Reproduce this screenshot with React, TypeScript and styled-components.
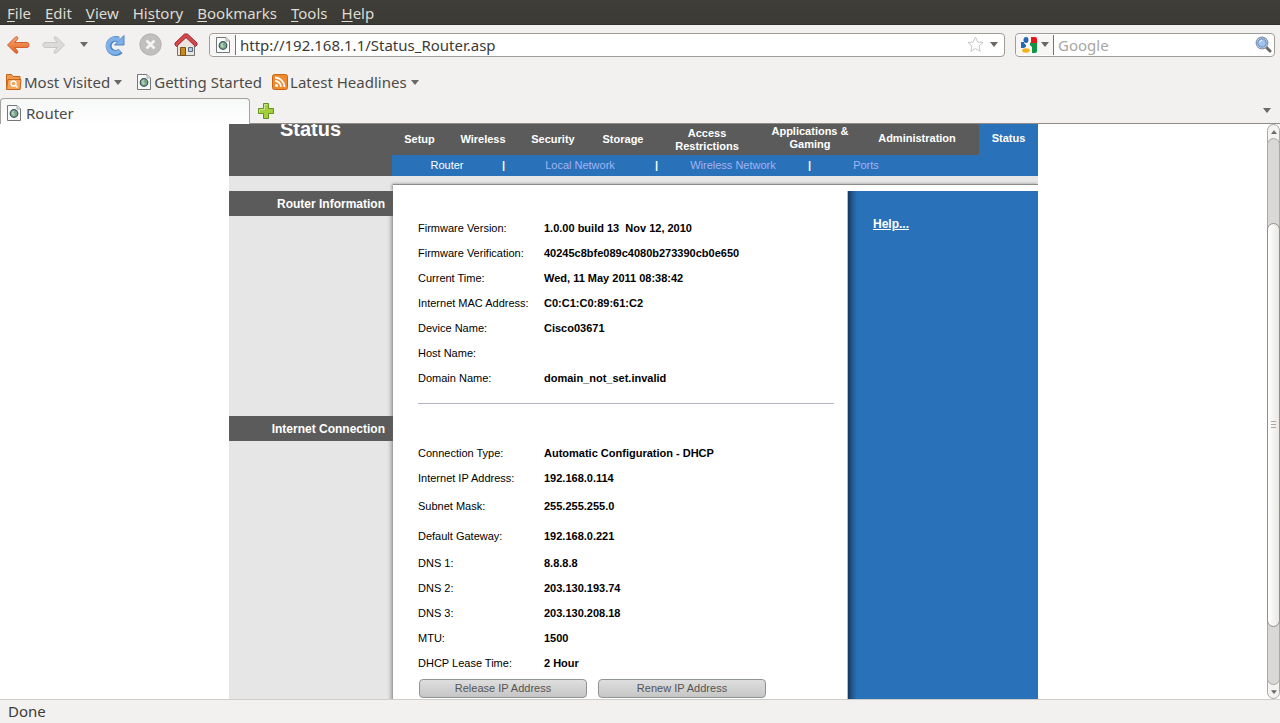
import React from "react";
import styled, { createGlobalStyle, css } from "styled-components";

const Global = createGlobalStyle`
  * { box-sizing: border-box; }
  body { margin: 0; background: #f2f1f0; }
  button, input { font: inherit; }
`;

const Browser = styled.div`
  display: flex;
  flex-direction: column;
  height: 100vh;
  overflow: hidden;
  font: 15px/20px "Noto Sans", "Open Sans", sans-serif;
  color: #3c3b37;
`;

const MenuBar = styled.nav`
  display: flex;
  align-items: center;
  gap: 14px;
  height: 25px;
  flex: none;
  padding: 1px 7px 0;
  background: linear-gradient(#3f3e39, #3b3a35);
  border-bottom: 1px solid #32312d;
`;

const MenuItem = styled.button`
  border: 0;
  padding: 0;
  background: none;
  color: #dfdbd2;
  line-height: 20px;
`;

const Key = styled.span`
  text-decoration: underline;
  text-underline-offset: 2px;
`;

const Toolbar = styled.div`
  display: flex;
  align-items: center;
  flex: none;
  height: 39px;
  padding: 0 5px 0 6px;
`;

const ToolGroup = styled.div`
  display: flex;
  align-items: center;
  gap: 12px;
  width: 203px;
`;

const IconButton = styled.button<{ $width?: number }>`
  display: flex;
  align-items: center;
  justify-content: center;
  flex: none;
  ${(p) => p.$width && css`width: ${p.$width}px;`}
  border: 0;
  padding: 0;
  background: none;
`;

const Field = styled.div<{ $search?: boolean }>`
  display: flex;
  align-items: center;
  gap: 4px;
  height: 24px;
  border: 1px solid #a09c97;
  border-radius: 4px;
  background: #fff;
  overflow: hidden;
  ${(p) =>
    p.$search
      ? css`flex: none; width: 260px; margin-left: 10px; padding-right: 2px;`
      : css`flex: 1; padding-right: 4px;`}
`;

const FieldLead = styled.div<{ $width: number }>`
  display: flex;
  align-items: center;
  justify-content: center;
  gap: 4px;
  flex: none;
  width: ${(p) => p.$width}px;
  height: 20px;
  border-right: 1px solid #77746f;
  background: #f7f6f5;
`;

const TextInput = styled.input`
  flex: 1;
  min-width: 0;
  border: 0;
  outline: 0;
  padding: 0;
  background: none;
  color: #3c3b37;
  line-height: 20px;
  &::placeholder { color: #aaa7a3; opacity: 1; }
`;

const Bookmarks = styled.div`
  display: flex;
  align-items: center;
  gap: 10px;
  flex: none;
  height: 34px;
  padding: 2px 5px 0;
`;

const Bookmark = styled.button`
  display: flex;
  align-items: center;
  gap: 2px;
  border: 0;
  padding: 0;
  background: none;
  color: #4c4b48;
  line-height: 20px;
`;

const FolderCaret = styled.span`
  display: flex;
  padding: 0 4px 0 2px;
`;

const TabStrip = styled.div`
  display: flex;
  align-items: center;
  flex: none;
  height: 26px;
  padding-right: 9px;
  border-bottom: 1px solid #8f8c88;
`;

const Tab = styled.button`
  display: flex;
  align-items: center;
  gap: 4px;
  align-self: stretch;
  width: 250px;
  margin: 0 8px -1px 0;
  padding: 2px 5px 0;
  border: 1px solid #a5a29e;
  border-bottom: 0;
  border-radius: 4px 4px 0 0;
  background: linear-gradient(#f6f7f7, #fff);
  color: #4c4b48;
`;

const Spacer = styled.div`
  flex: 1;
`;

const Viewport = styled.div`
  display: flex;
  flex: 1;
  min-height: 0;
  background: #fff;
`;

const Scroller = styled.main`
  flex: 1;
  min-width: 0;
  overflow: hidden;
`;

const Page = styled.div`
  display: flex;
  flex-direction: column;
  width: 100%;
  max-width: 809px;
  min-height: calc(100% + 20px);
  margin: -20px auto 0;
  font: 11px/13px "Liberation Sans", Arial, sans-serif;
  color: #000;
`;

const Header = styled.header`
  display: flex;
  flex: none;
  background: #5b5b5b;
`;

const Title = styled.h1`
  width: 163px;
  margin: 0;
  padding: 13px 0 0 51px;
  font-size: 20px;
  line-height: 24px;
  color: #fff;
`;

const HeaderNav = styled.div`
  flex: 1;
`;

const Tabs = styled.nav`
  display: flex;
  height: 51px;
  padding-top: 20px;
`;

const TabLink = styled.a<{ $width: number; $raised?: boolean; $active?: boolean }>`
  display: flex;
  align-items: center;
  justify-content: center;
  width: ${(p) => p.$width}px;
  padding-bottom: ${(p) => (p.$raised ? 3 : 0)}px;
  background: ${(p) => (p.$active ? "#2971b9" : "none")};
  color: #fff;
  font-weight: bold;
  text-align: center;
  text-decoration: none;
  ${(p) => p.$active && css`margin-left: auto;`}
`;

const SubNav = styled.nav`
  display: flex;
  align-items: center;
  height: 21px;
  background: #2971b9;
  color: #fff;
  text-align: center;
`;

const SubLink = styled.a<{ $width: number; $active?: boolean }>`
  width: ${(p) => p.$width}px;
  color: ${(p) => (p.$active ? "#fff" : "#a3b4f5")};
  text-decoration: none;
`;

const Bar = styled.b`
  width: 3px;
`;

const Strip = styled.div`
  display: flex;
  flex: none;
  height: 15px;
  background: #e6e6e6;
  overflow: hidden;
`;

const StripEdge = styled.div`
  flex: 1;
  margin: 8px 0 0 164px;
  border-top: 1px solid #8c8c8c;
  background: #fff;
  box-shadow: -1px 0 3px #8c8c8c;
`;

const Body = styled.div`
  display: flex;
  flex: 1;
`;

const Sections = styled.div`
  display: flex;
  flex-direction: column;
  flex: 1;
`;

const Section = styled.section`
  display: flex;
  &:last-child { flex: 1; }
`;

const Side = styled.div`
  width: 164px;
  flex: none;
  background: linear-gradient(to left, #989898 0, #c2c2c2 2px, #dadada 4px, #e6e6e6 6px);
`;

const SideTitle = styled.h2`
  margin: 0;
  padding: 1px 8px 0 0;
  background: #5b5b5b;
  color: #fff;
  font-size: 12px;
  line-height: 24px;
  text-align: right;
`;

const Content = styled.div`
  flex: 1;
  padding: 25px 13px 0 25px;
`;

const Facts = styled.table`
  width: 100%;
  border-collapse: collapse;
  th, td { padding: 0; text-align: left; white-space: pre; }
  th { width: 126px; font-weight: normal; }
  td { font-weight: bold; }
`;

const FactRow = styled.tr<{ $tall?: boolean }>`
  height: ${(p) => (p.$tall ? 30 : 25)}px;
`;

const Rule = styled.hr`
  height: 1px;
  margin: 12px 0;
  border: 0;
  background: #b3b3c9;
`;

const Actions = styled.div`
  display: flex;
  gap: 11px;
  padding: 3px 1px 0;
`;

const Action = styled.button`
  width: 168px;
  height: 19px;
  padding: 0;
  border: 1px solid #8f9494;
  border-radius: 4px;
  background: linear-gradient(#dedede, #c6c6c6);
  color: #555;
`;

const Help = styled.aside`
  width: 191px;
  flex: none;
  padding: 26px;
  background: linear-gradient(to right, #a9bfd6 0, #a9bfd6 1px, #16365c 1px, #1f5890 5px, #2971b9 10px);
`;

const HelpLink = styled.a`
  color: #fff;
  font-size: 12px;
  line-height: 14px;
  font-weight: bold;
`;

const Scrollbar = styled.div`
  display: flex;
  flex-direction: column;
  width: 13px;
  flex: none;
  border: 1px solid #aaa7a3;
  border-radius: 7px;
  background: #f4f3f2;
`;

const ScrollButton = styled.button`
  display: flex;
  align-items: center;
  justify-content: center;
  height: 13px;
  flex: none;
  padding: 0;
  border: 0;
  background: none;
`;

const Track = styled.div`
  display: flex;
  flex-direction: column;
  flex: 1;
  margin: 0 -1px;
  border: 1px solid #aaa7a3;
  border-radius: 7px;
  background: #dad8d6;
`;

const Thumb = styled.div`
  display: flex;
  align-items: center;
  justify-content: center;
  flex: 405;
  margin: 0 -1px;
  border: 1px solid #918e8a;
  border-radius: 7px;
  background: linear-gradient(to right, #fff, #e9e8e6);
`;

const TrackGap = styled.div<{ $grow: number }>`
  flex: ${(p) => p.$grow};
`;

const StatusBar = styled.footer`
  flex: none;
  height: 24px;
  padding: 1px 8px;
  border-top: 1px solid #cfccc9;
`;

const Caret = ({ up = false, small = false }: { up?: boolean; small?: boolean }) => (
  <svg width={small ? 6 : 8} height={small ? 4 : 5} viewBox="0 0 8 5">
    <path d={up ? "M0 5 4 0 8 5z" : "M0 0h8L4 5z"} fill="#6b6965" />
  </svg>
);

const PageIcon = () => (
  <svg width="16" height="16" viewBox="0 0 16 16">
    <path d="M1.5.5h9.500l3.500 3.500v11.500h-13z" fill="#fbfbfa" stroke="#72777a" />
    <path d="M11 .5v3.500h3.500" fill="#dfe2e0" stroke="#a6aaa8" />
    <circle cx="8" cy="8.500" r="3.800" fill="#7aa886" stroke="#3a5365" strokeWidth="1.200" />
    <path d="M5.500 8q1-3 3-2.500l-1 2.500 1.500 1-1 2q-2-.5-2.500-3z" fill="#b3d0b0" />
  </svg>
);

const BackIcon = () => (
  <svg width="24" height="22" viewBox="0 0 24 22">
    <defs>
      <linearGradient id="orange" x2="0" y2="1">
        <stop stopColor="#f8a878" />
        <stop offset="1" stopColor="#e4601c" />
      </linearGradient>
    </defs>
    <path
      d="M1.500 11 9.500 3q2-1 2.500 1 0 1-3.500 4.500H21q2 0 2 2.500t-2 2.500H8.500Q12 17 12 18q-.5 2-2.500 1z"
      fill="url(#orange)"
      stroke="#cf6330"
    />
  </svg>
);

const ForwardIcon = () => (
  <svg width="24" height="22" viewBox="0 0 24 22">
    <path
      d="M22.500 11 14.500 3q-2-1-2.500 1 0 1 3.500 4.500H3Q1 8.500 1 11t2 2.500h12.500Q12 17 12 18q.5 2 2.500 1z"
      fill="#dddbd9"
      stroke="#c9c7c4"
    />
  </svg>
);

const ReloadIcon = () => (
  <svg width="22" height="22" viewBox="0 0 22 22">
    <path d="M15.500 5.500A7 7 0 1 0 17.500 17" fill="none" stroke="#4c84c4" strokeWidth="6" />
    <path d="M21 1.500v9.500h-9.500z" fill="#7fb1e6" stroke="#4c84c4" strokeLinejoin="round" />
    <path d="M16.500 6.500A7 7 0 1 0 17 16.500" fill="none" stroke="#7fb1e6" strokeWidth="4" />
  </svg>
);

const StopIcon = () => (
  <svg width="23" height="23" viewBox="0 0 23 23">
    <circle cx="11.500" cy="11.500" r="10.700" fill="#c1bfbd" stroke="#b5b3b1" />
    <path d="m7.500 7.500 8 8m0-8-8 8" stroke="#f5f4f3" strokeWidth="2.500" />
  </svg>
);

const HomeIcon = () => (
  <svg width="24" height="24" viewBox="0 0 24 24">
    <path d="M3.500 12 12 4l8.500 8v10.500h-17z" fill="#e9e6df" stroke="#77736c" />
    <path d="M6.500 14.500h5v8h-5z" fill="#c98a1c" stroke="#7a5211" />
    <path d="M14.500 14.500h4v4h-4z" fill="#b5cbe0" stroke="#596d80" />
    <path
      d="M2.500 13.500 12 4.500l9.500 9 1.500-1.500V10L13.500 1h-3L1 10v2z"
      fill="#d5484d"
      stroke="#a12a30"
      strokeLinejoin="round"
    />
  </svg>
);

const FolderIcon = () => (
  <svg width="17" height="16" viewBox="0 0 17 16">
    <path d="M1.500 15V.5h5l1.500 2h7v12.500z" fill="#f29a4c" stroke="#c4641c" />
    <path d="m1.500 15.500 1.500-10h13l-1 10z" fill="#f5a65c" stroke="#c4641c" />
    <circle cx="8.500" cy="9.500" r="2.500" fill="none" stroke="#fff" strokeWidth="1.300" />
    <path d="m10.500 11.500 2 2" stroke="#fff" strokeWidth="1.500" />
  </svg>
);

const FeedIcon = () => (
  <svg width="16" height="16" viewBox="0 0 16 16">
    <rect x=".5" y=".5" width="15" height="15" rx="2" fill="#f08a2c" stroke="#cb6516" />
    <circle cx="4.500" cy="11.500" r="1.500" fill="#fff" />
    <path d="M3 7a6 6 0 0 1 6 6M3 3.500A9.500 9.500 0 0 1 12.500 13" fill="none" stroke="#fff" strokeWidth="1.800" />
  </svg>
);

const PlusIcon = () => (
  <svg width="16" height="16" viewBox="0 0 16 16">
    <path d="M5.500.5h5v5h5v5h-5v5h-5v-5h-5v-5h5z" fill="#a4cf3c" stroke="#64901d" strokeLinejoin="round" />
    <path d="M1.500 9.500v-3h5v-5h3" fill="none" stroke="#cbe58a" />
  </svg>
);

const StarIcon = () => (
  <svg width="17" height="17" viewBox="0 0 17 17">
    <path
      d="m8.500 1 2.200 5 5.300.5-4 3.500 1.200 5.300-4.700-2.800-4.700 2.800L5 10 1 6.500 6.300 6z"
      fill="#fff"
      stroke="#c9c7c5"
    />
  </svg>
);

const GoogleIcon = () => (
  <svg width="16" height="16" viewBox="0 0 16 16">
    <path d="M8 0h6q2 0 2 2v4H9z" fill="#e5191c" />
    <path d="M9 6h7v8q0 2-2 2H9z" fill="#109447" />
    <path d="M0 5h5v6H0z" fill="#2767b5" />
    <path d="M3 0h7v5L8 7l3 3v6H4L3 11l3-2-3-3z" fill="#fff" />
    <ellipse cx="5" cy="3" rx="2.500" ry="3" fill="#2767b5" />
    <ellipse cx="5" cy="13.500" rx="3.800" ry="2.200" fill="#f2b21d" />
  </svg>
);

const SearchIcon = () => (
  <svg width="17" height="17" viewBox="0 0 17 17">
    <path d="m11 11 4 4" stroke="#6b6965" strokeWidth="3" strokeLinecap="round" />
    <circle cx="7" cy="7" r="5.800" fill="#dfe8f4" stroke="#8793a6" strokeWidth="1.200" />
    <circle cx="7" cy="7" r="4.200" fill="#a3c3ee" stroke="#5580bd" />
    <path d="M4.500 6.500q.5-2 2.500-2.500" stroke="#fff" fill="none" />
  </svg>
);

const Grip = () => (
  <svg width="5" height="8" viewBox="0 0 5 8">
    <path d="M0 .5h5M0 3.500h5M0 6.500h5" stroke="#aaa7a3" />
  </svg>
);

type Fact = [string, string, boolean?];

const routerFacts: Fact[] = [
  ["Firmware Version:", "1.0.00 build 13  Nov 12, 2010"],
  ["Firmware Verification:", "40245c8bfe089c4080b273390cb0e650"],
  ["Current Time:", "Wed, 11 May 2011 08:38:42"],
  ["Internet MAC Address:", "C0:C1:C0:89:61:C2"],
  ["Device Name:", "Cisco03671"],
  ["Host Name:", ""],
  ["Domain Name:", "domain_not_set.invalid"],
];

const connectionFacts: Fact[] = [
  ["Connection Type:", "Automatic Configuration - DHCP"],
  ["Internet IP Address:", "192.168.0.114"],
  ["Subnet Mask:", "255.255.255.0", true],
  ["Default Gateway:", "192.168.0.221", true],
  ["DNS 1:", "8.8.8.8"],
  ["DNS 2:", "203.130.193.74"],
  ["DNS 3:", "203.130.208.18"],
  ["MTU:", "1500"],
  ["DHCP Lease Time:", "2 Hour"],
];

const menus: [string, string, string][] = [
  ["", "F", "ile"],
  ["", "E", "dit"],
  ["", "V", "iew"],
  ["Hi", "s", "tory"],
  ["", "B", "ookmarks"],
  ["", "T", "ools"],
  ["", "H", "elp"],
];

const FactTable = ({ facts }: { facts: Fact[] }) => (
  <Facts>
    <tbody>
      {facts.map(([label, value, tall]) => (
        <FactRow key={label} $tall={tall}>
          <th scope="row">{label}</th>
          <td>{value}</td>
        </FactRow>
      ))}
    </tbody>
  </Facts>
);

export default function App() {
  return (
    <Browser>
      <Global />
      <MenuBar>
        {menus.map(([before, key, after]) => (
          <MenuItem key={after}>{before}<Key>{key}</Key>{after}</MenuItem>
        ))}
      </MenuBar>
      <Toolbar>
        <ToolGroup>
          <IconButton $width={24} aria-label="Back"><BackIcon /></IconButton>
          <IconButton $width={24} aria-label="Forward"><ForwardIcon /></IconButton>
          <IconButton $width={12} aria-label="Recent pages"><Caret /></IconButton>
          <IconButton $width={24} aria-label="Reload"><ReloadIcon /></IconButton>
          <IconButton $width={24} aria-label="Stop"><StopIcon /></IconButton>
          <IconButton $width={24} aria-label="Home"><HomeIcon /></IconButton>
        </ToolGroup>
        <Field>
          <FieldLead $width={26}><PageIcon /></FieldLead>
          <TextInput aria-label="Address" defaultValue="http://192.168.1.1/Status_Router.asp" />
          <IconButton aria-label="Bookmark this page"><StarIcon /></IconButton>
          <IconButton $width={12} aria-label="Show history"><Caret /></IconButton>
        </Field>
        <Field $search>
          <FieldLead $width={38}><GoogleIcon /><Caret /></FieldLead>
          <TextInput aria-label="Search" placeholder="Google" />
          <IconButton aria-label="Search"><SearchIcon /></IconButton>
        </Field>
      </Toolbar>
      <Bookmarks>
        <Bookmark><FolderIcon />Most Visited<FolderCaret><Caret /></FolderCaret></Bookmark>
        <Bookmark><PageIcon />Getting Started</Bookmark>
        <Bookmark><FeedIcon />Latest Headlines<FolderCaret><Caret /></FolderCaret></Bookmark>
      </Bookmarks>
      <TabStrip>
        <Tab><PageIcon />Router</Tab>
        <IconButton aria-label="New tab"><PlusIcon /></IconButton>
        <Spacer />
        <IconButton aria-label="List all tabs"><Caret /></IconButton>
      </TabStrip>
      <Viewport>
        <Scroller>
          <Page>
            <Header>
              <Title>Status</Title>
              <HeaderNav>
                <Tabs>
                  <TabLink href="#setup" $width={55}>Setup</TabLink>
                  <TabLink href="#wireless" $width={72}>Wireless</TabLink>
                  <TabLink href="#security" $width={68}>Security</TabLink>
                  <TabLink href="#storage" $width={72}>Storage</TabLink>
                  <TabLink href="#access" $width={96}>Access<br />Restrictions</TabLink>
                  <TabLink href="#applications" $width={110} $raised>Applications &amp;<br />Gaming</TabLink>
                  <TabLink href="#administration" $width={104} $raised>Administration</TabLink>
                  <TabLink href="#status" $width={59} $raised $active>Status</TabLink>
                </Tabs>
                <SubNav>
                  <SubLink href="#router" $width={110} $active>Router</SubLink>
                  <Bar>|</Bar>
                  <SubLink href="#local" $width={150}>Local Network</SubLink>
                  <Bar>|</Bar>
                  <SubLink href="#wireless-network" $width={150}>Wireless Network</SubLink>
                  <Bar>|</Bar>
                  <SubLink href="#ports" $width={110}>Ports</SubLink>
                </SubNav>
              </HeaderNav>
            </Header>
            <Strip><StripEdge /></Strip>
            <Body>
              <Sections>
                <Section>
                  <Side><SideTitle>Router Information</SideTitle></Side>
                  <Content>
                    <FactTable facts={routerFacts} />
                    <Rule />
                  </Content>
                </Section>
                <Section>
                  <Side><SideTitle>Internet Connection</SideTitle></Side>
                  <Content>
                    <FactTable facts={connectionFacts} />
                    <Actions>
                      <Action>Release IP Address</Action>
                      <Action>Renew IP Address</Action>
                    </Actions>
                  </Content>
                </Section>
              </Sections>
              <Help><HelpLink href="#help">Help...</HelpLink></Help>
            </Body>
          </Page>
        </Scroller>
        <Scrollbar>
          <ScrollButton aria-label="Scroll up"><Caret up small /></ScrollButton>
          <Track>
            <TrackGap $grow={85} />
            <Thumb><Grip /></Thumb>
            <TrackGap $grow={58} />
          </Track>
          <ScrollButton aria-label="Scroll down"><Caret small /></ScrollButton>
        </Scrollbar>
      </Viewport>
      <StatusBar>Done</StatusBar>
    </Browser>
  );
}
